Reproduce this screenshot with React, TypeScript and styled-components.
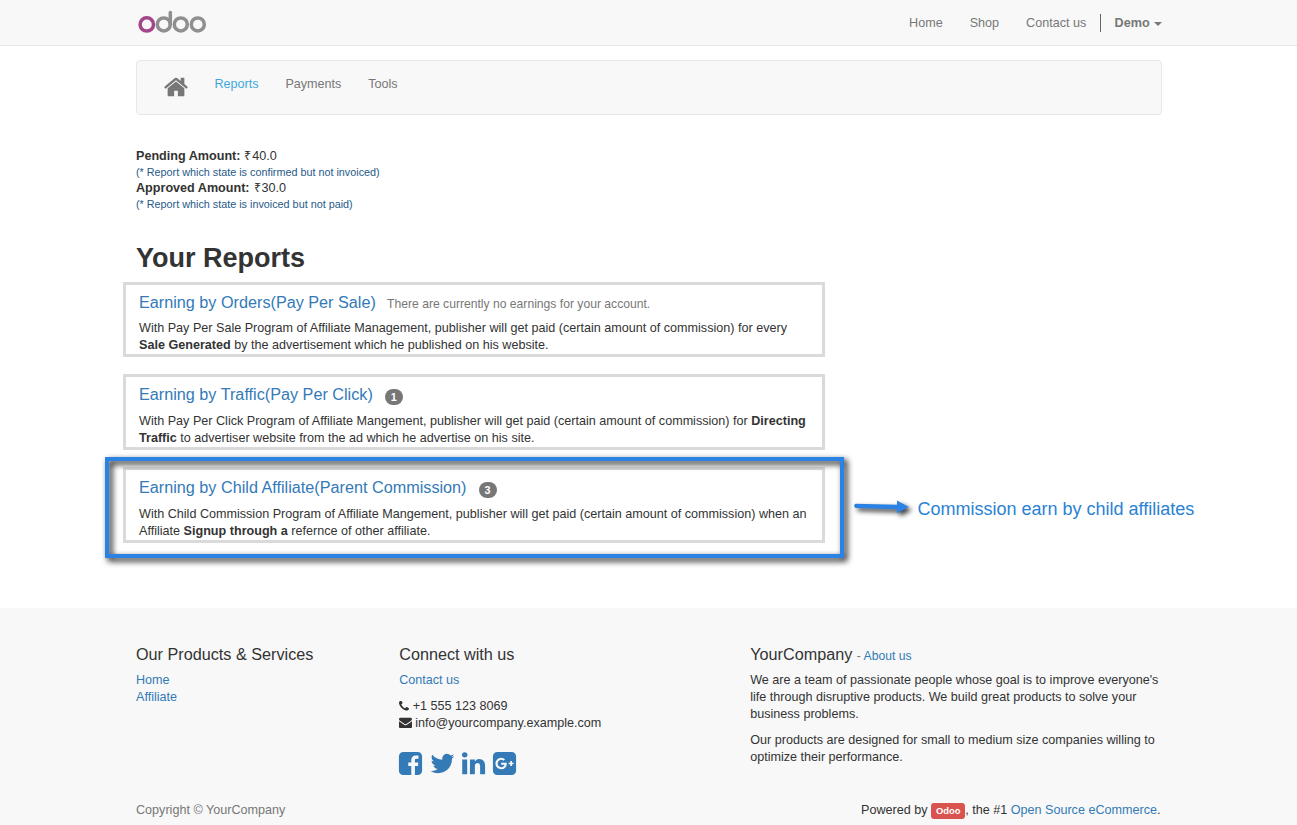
import React from 'react';
import styled, { createGlobalStyle } from 'styled-components';

const Global = createGlobalStyle`
  * { box-sizing: border-box; }
  body {
    margin: 0;
    background: #fff;
    color: #333;
    font-family: "Liberation Sans", Arial, sans-serif;
    font-size: 12.605px;
    line-height: 17px;
    overflow: hidden;
  }
  h1, h3, h4, p { margin: 0; font-weight: normal; }
  a { color: #337ab7; text-decoration: none; }
`;

const Page = styled.div`
  height: 825px;
  display: flex;
  flex-direction: column;
  white-space: nowrap;
  overflow: hidden;
`;
const Container = styled.div`
  flex: none;
  width: 1026px;
  margin-left: 136px;
`;
const Header = styled.header`
  flex: none;
  height: 46px;
  background: #f8f8f8;
  border-bottom: 1px solid #e7e7e7;
`;
const HeaderRow = styled(Container)`
  display: flex;
  justify-content: space-between;
  height: 45px;
`;
const Logo = styled.svg`
  width: 72px;
  height: 26px;
  margin: 9px 0 0 1px;
`;
const TopNav = styled.nav`
  display: flex;
  padding-top: 14px;
`;
const TopLink = styled.a<{ $gap?: number }>`
  color: #777;
  padding-top: 1px;
  margin-right: ${(p) => p.$gap ?? 27}px;
`;
const UserMenu = styled.a`
  display: flex;
  height: 18px;
  padding: 1px 0 0 13.3px;
  border-left: 1px solid #666;
  color: #777;
  font-weight: bold;
`;
const Caret = styled.span`
  margin: 7px 0 0 4.4px;
  width: 0;
  height: 0;
  border: 4px solid transparent;
  border-top: 4px solid #777;
  border-bottom: 0;
`;
const SubNav = styled(Container).attrs({ as: 'nav' })`
  display: flex;
  height: 55px;
  margin-top: 14px;
  padding: 14px 0 0 26px;
  background: #f8f8f8;
  border: 1px solid #e7e7e7;
  border-radius: 4px;
`;
const SubLink = styled.a<{ $active?: boolean }>`
  color: ${(p) => (p.$active ? '#3fa9dd' : '#777')};
  padding-top: 1px;
  margin-right: 26.8px;
`;
const Glyph = styled.svg<{ $size: number }>`
  width: ${(p) => p.$size}px;
  height: ${(p) => p.$size}px;
  fill: currentColor;
  flex: none;
`;
const HomeLink = styled.a`
  color: #777;
  height: 26px;
  margin: -1px 25.5px 0 0;
`;
const Summary = styled(Container)`
  margin-top: 33px;
  line-height: 16px;
`;
const Rupee = styled.span`
  margin: 0 0.8px 0 0.5px;
`;
const Note = styled.div`
  color: #265a88;
  font-size: 10.8px;
`;
const Title = styled.h1`
  margin: 31px 0 8px;
  font-size: 27px;
  line-height: 31px;
  font-weight: bold;
`;
const Reports = styled.section`
  flex: none;
  position: relative;
  width: 702px;
  margin-left: 123px;
  display: flex;
  flex-direction: column;
  gap: 17px;
`;
const Card = styled.article<{ $first?: boolean }>`
  height: ${(p) => (p.$first ? 75 : 76)}px;
  border: 3px solid #dadada;
  padding: 7px 0 0 13px;
`;
const CardHead = styled.div<{ $first?: boolean }>`
  display: flex;
  height: ${(p) => (p.$first ? 28 : 29)}px;
`;
const CardTitle = styled.h4`
  font-size: 16.22px;
  line-height: 20px;
  color: #337ab7;
`;
const Empty = styled.span`
  color: #777;
  font-size: 12.15px;
  line-height: 24px;
  margin-left: 11.2px;
`;
const Badge = styled.span`
  width: 18px;
  height: 16px;
  margin: 5px 0 0 12px;
  border-radius: 9px;
  background: #777;
  color: #fff;
  font-size: 10.8px;
  line-height: 17px;
  font-weight: bold;
  text-align: center;
`;
const Highlight = styled.div`
  position: absolute;
  left: -18px;
  top: 175px;
  width: 739px;
  height: 101px;
  border: 4px solid #2a82e4;
  filter: drop-shadow(3px 3px 3px #000);
`;
const Callout = styled.div`
  position: absolute;
  left: 727.5px;
  top: 211px;
  display: flex;
  color: #2a82d4;
  font-size: 18px;
  line-height: 32px;
`;
const Arrow = styled.svg`
  width: 67px;
  height: 32px;
  overflow: visible;
`;
const ArrowShape = styled.path`
  fill: #2a82e4;
  filter: drop-shadow(3px 3px 2.5px rgba(0, 0, 0, 0.8));
`;
const Footer = styled.footer`
  flex: 1;
  margin-top: 65px;
  padding-top: 36px;
  background: #f8f8f8;
`;
const Columns = styled(Container)`
  display: grid;
  grid-template-columns: 263.2px 351px 411px;
  height: 150px;
`;
const Column = styled.div`
  display: flex;
  flex-direction: column;
`;
const ColumnTitle = styled.h3`
  height: 20px;
  font-size: 16.2px;
  line-height: 20px;
  margin-bottom: 8px;
`;
const AboutSuffix = styled.small`
  font-size: 12.15px;
  color: #777;
`;
const Para = styled.p`
  margin-bottom: 9px;
`;
const ContactLine = styled.div<{ $gap: number }>`
  display: flex;
  align-items: center;
  gap: ${(p) => p.$gap}px;
  height: 17px;

  svg { margin-top: -2px; }
`;
const Social = styled.div`
  display: flex;
  gap: 4.4px;
  margin: 18px 0 0 -2px;
  color: #337ab7;
`;
const Bottom = styled(Container)`
  display: flex;
  justify-content: space-between;
  padding: 8px 1.5px 0 0;
`;
const Muted = styled.span`
  color: #777;
`;
const Powered = styled.div`
  display: flex;
  white-space: pre;
`;
const OdooTag = styled.span`
  height: 16px;
  margin: 1px 0 0;
  padding: 0 4.8px;
  border-radius: 3px;
  background: #d9534f;
  color: #fff;
  font-size: 9.4px;
  line-height: 16px;
  font-weight: bold;
`;

const paths = {
  home: 'M1472 992v480q0 26-19 45t-45 19h-384v-384h-256v384h-384q-26 0-45-19t-19-45v-480q0-1 .5-3t.5-3l575-474 575 474q1 2 1 6zm223-69l-62 74q-8 9-21 11h-3q-13 0-21-7l-692-577-692 577q-12 8-24 7-13-2-21-11l-62-74q-8-10-7-23.5t11-21.5l719-599q32-26 76-26t76 26l244 204v-195q0-14 9-23t23-9h192q14 0 23 9t9 23v408l219 182q10 8 11 21.5t-7 23.5z',
  phone: 'M1600 1240q0 27-10 70.5t-21 68.5q-21 50-122 106-94 51-186 51-27 0-53-3.5t-57.5-12.5-47-14.5-55.5-20.5-49-18q-98-35-175-83-127-79-264-216t-216-264q-48-77-83-175-3-9-18-49t-20.5-55.5-14.5-47-12.5-57.5-3.5-53q0-92 51-186 56-101 106-122 25-11 68.5-21t70.5-10q14 0 21 3 18 6 53 76 11 19 30 54t35 63.5 31 53.5q3 4 17.5 25t21.5 35.5 7 28.5q0 20-28.5 50t-62 55-62 53-28.5 46q0 9 5 22.5t8.5 20.5 14 24 11.5 19q76 137 174 235t235 174q2 1 19 11.5t24 14 20.5 8.5 22.5 5q18 0 46-28.5t53-62 55-62 50-28.5q14 0 28.5 7t35.5 21.5 25 17.5q25 15 53.5 31t63.5 35 54 30q70 35 76 53 3 7 3 21z',
  envelope: 'M1792 710v794q0 66-47 113t-113 47h-1472q-66 0-113-47t-47-113v-794q44 49 101 87 362 246 497 345 57 42 92.5 65.5t94.5 48 110 24.5h2q51 0 110-24.5t94.5-48 92.5-65.5q170-123 498-345 57-39 100-87zm0-294q0 79-49 151t-122 123q-376 261-468 325-10 7-42.5 31t-54 38.5-52 32.5-57.5 27-50 9h-2q-23 0-50-9t-57.5-27-52-32.5-54-38.5-42.5-31q-91-64-262-182.5t-205-142.5q-62-42-117-115.5t-55-136.5q0-78 41.5-130t118.5-52h1472q65 0 112.5 47t47.5 113z',
  facebook: 'M1376 128q119 0 203.5 84.5t84.5 203.5v960q0 119-84.5 203.5t-203.5 84.5h-188v-595h199l30-232h-229v-148q0-56 23.5-84t91.5-28l122-1v-207q-63-9-178-9-136 0-217.5 80t-81.5 226v171h-200v232h200v595h-532q-119 0-203.5-84.5t-84.5-203.5v-960q0-119 84.5-203.5t203.5-84.5h960z',
  twitter: 'M1684 408q-67 98-162 167 1 14 1 42 0 130-38 259.5t-115.5 248.5-184.5 210.5-258 146-323 54.5q-271 0-496-145 35 4 78 4 225 0 401-138-105-2-188-64.5t-114-159.5q33 5 61 5 43 0 85-11-112-23-185.5-111.5t-73.5-205.5v-4q68 38 146 41-66-44-105-115t-39-154q0-88 44-163 121 149 294.5 238.5t371.5 99.5q-8-38-8-74 0-134 94.5-228.5t228.5-94.5q140 0 236 102 109-21 205-78-37 115-142 178 93-10 186-50z',
  linkedin: 'M477 625v991h-330v-991h330zm21-306q1 73-50.5 122t-135.5 49h-2q-82 0-132-49t-50-122q0-74 51.5-122.5t134.5-48.5 133 48.5 51 122.5zm1166 729v568h-329v-530q0-105-40.5-164.5t-126.5-59.5q-63 0-105.5 34.5t-63.5 85.5q-11 30-11 81v553h-329q2-399 2-647t-1-296l-1-48h329v144h-2q20-32 41-56t56.5-52 87-43.5 114.5-15.5q171 0 275 113.5t104 332.5z',
  google: 'M1045 905q0-26-6-64h-362v132h217q-3 24-16.5 50t-37.5 53-66.5 44.5-96.5 17.5q-99 0-169-71t-70-171 70-171 169-71q92 0 153 59l104-101q-108-100-257-100-160 0-272 112.5t-112 271.5 112 271.5 272 112.5q165 0 266.5-105t101.5-270zm345 46h109v-110h-109v-110h-110v110h-110v110h110v110h110v-110zm274-535v960q0 119-84.5 203.5t-203.5 84.5h-960q-119 0-203.5-84.5t-84.5-203.5v-960q0-119 84.5-203.5t203.5-84.5h960q119 0 203.5 84.5t84.5 203.5z',
};

function Icon({ name, size, box = '0 0 1792 1792' }: { name: keyof typeof paths; size: number; box?: string }) {
  return (
    <Glyph $size={size} viewBox={box} aria-hidden>
      <path d={paths[name]} />
    </Glyph>
  );
}

export default function App() {
  return (
    <Page>
      <Global />
      <Header>
        <HeaderRow>
          <Logo viewBox="137 9 72 26" fill="none" strokeWidth="3.5">
            <circle cx="146.8" cy="24.4" r="6.7" stroke="#a24689" />
            <circle cx="163.8" cy="24.4" r="6.5" stroke="#8f8f8f" />
            <path d="M170.3 12.6V24.4" stroke="#8f8f8f" strokeLinecap="round" />
            <circle cx="180.8" cy="24.4" r="6.5" stroke="#8f8f8f" />
            <circle cx="197.8" cy="24.4" r="6.5" stroke="#8f8f8f" />
          </Logo>
          <TopNav>
            <TopLink>Home</TopLink>
            <TopLink>Shop</TopLink>
            <TopLink $gap={14}>Contact us</TopLink>
            <UserMenu>Demo<Caret /></UserMenu>
          </TopNav>
        </HeaderRow>
      </Header>

      <SubNav>
        <HomeLink><Icon name="home" size={26} /></HomeLink>
        <SubLink $active>Reports</SubLink>
        <SubLink>Payments</SubLink>
        <SubLink>Tools</SubLink>
      </SubNav>

      <Summary>
        <div><b>Pending Amount:</b> <Rupee>₹</Rupee>40.0</div>
        <Note>(* Report which state is confirmed but not invoiced)</Note>
        <div><b>Approved Amount:</b> <Rupee>₹</Rupee>30.0</div>
        <Note>(* Report which state is invoiced but not paid)</Note>
        <Title>Your Reports</Title>
      </Summary>

      <Reports>
        <Card $first>
          <CardHead $first>
            <CardTitle>Earning by Orders(Pay Per Sale)</CardTitle>
            <Empty>There are currently no earnings for your account.</Empty>
          </CardHead>
          <p>
            With Pay Per Sale Program of Affiliate Management, publisher will get paid (certain amount of commission) for every<br />
            <b>Sale Generated</b> by the advertisement which he published on his website.
          </p>
        </Card>
        <Card>
          <CardHead>
            <CardTitle>Earning by Traffic(Pay Per Click)</CardTitle>
            <Badge>1</Badge>
          </CardHead>
          <p>
            With Pay Per Click Program of Affiliate Mangement, publisher will get paid (certain amount of commission) for <b>Directing<br />
            Traffic</b> to advertiser website from the ad which he advertise on his site.
          </p>
        </Card>
        <Card>
          <CardHead>
            <CardTitle>Earning by Child Affiliate(Parent Commission)</CardTitle>
            <Badge>3</Badge>
          </CardHead>
          <p>
            With Child Commission Program of Affiliate Mangement, publisher will get paid (certain amount of commission) when an<br />
            Affiliate <b>Signup through a</b> refernce of other affiliate.
          </p>
        </Card>
        <Highlight />
        <Callout>
          <Arrow viewBox="0 0 67 32">
            <ArrowShape d="M4.5 10.8 Q1.6 12.8 4.5 15 L46 16.2 V20.3 L57.8 14 L46 7.6 V11.8 Z" />
          </Arrow>
          Commission earn by child affiliates
        </Callout>
      </Reports>

      <Footer>
        <Columns>
          <Column>
            <ColumnTitle>Our Products &amp; Services</ColumnTitle>
            <a>Home</a>
            <a>Affiliate</a>
          </Column>
          <Column>
            <ColumnTitle>Connect with us</ColumnTitle>
            <Para><a>Contact us</a></Para>
            <ContactLine $gap={3.5}><Icon name="phone" size={10} box="192 192 1408 1408" />+1 555 123 8069</ContactLine>
            <ContactLine $gap={3}><Icon name="envelope" size={13} />info@yourcompany.example.com</ContactLine>
            <Social>
              <Icon name="facebook" size={27} />
              <Icon name="twitter" size={27} />
              <Icon name="linkedin" size={27} />
              <Icon name="google" size={27} />
            </Social>
          </Column>
          <Column>
            <ColumnTitle>YourCompany <AboutSuffix>- <a>About us</a></AboutSuffix></ColumnTitle>
            <Para>
              We are a team of passionate people whose goal is to improve everyone's<br />
              life through disruptive products. We build great products to solve your<br />
              business problems.
            </Para>
            <Para>
              Our products are designed for small to medium size companies willing to<br />
              optimize their performance.
            </Para>
          </Column>
        </Columns>
        <Bottom>
          <Muted>Copyright © YourCompany</Muted>
          <Powered>Powered by <OdooTag>Odoo</OdooTag>, the #1 <a>Open Source eCommerce</a>.</Powered>
        </Bottom>
      </Footer>
    </Page>
  );
}
